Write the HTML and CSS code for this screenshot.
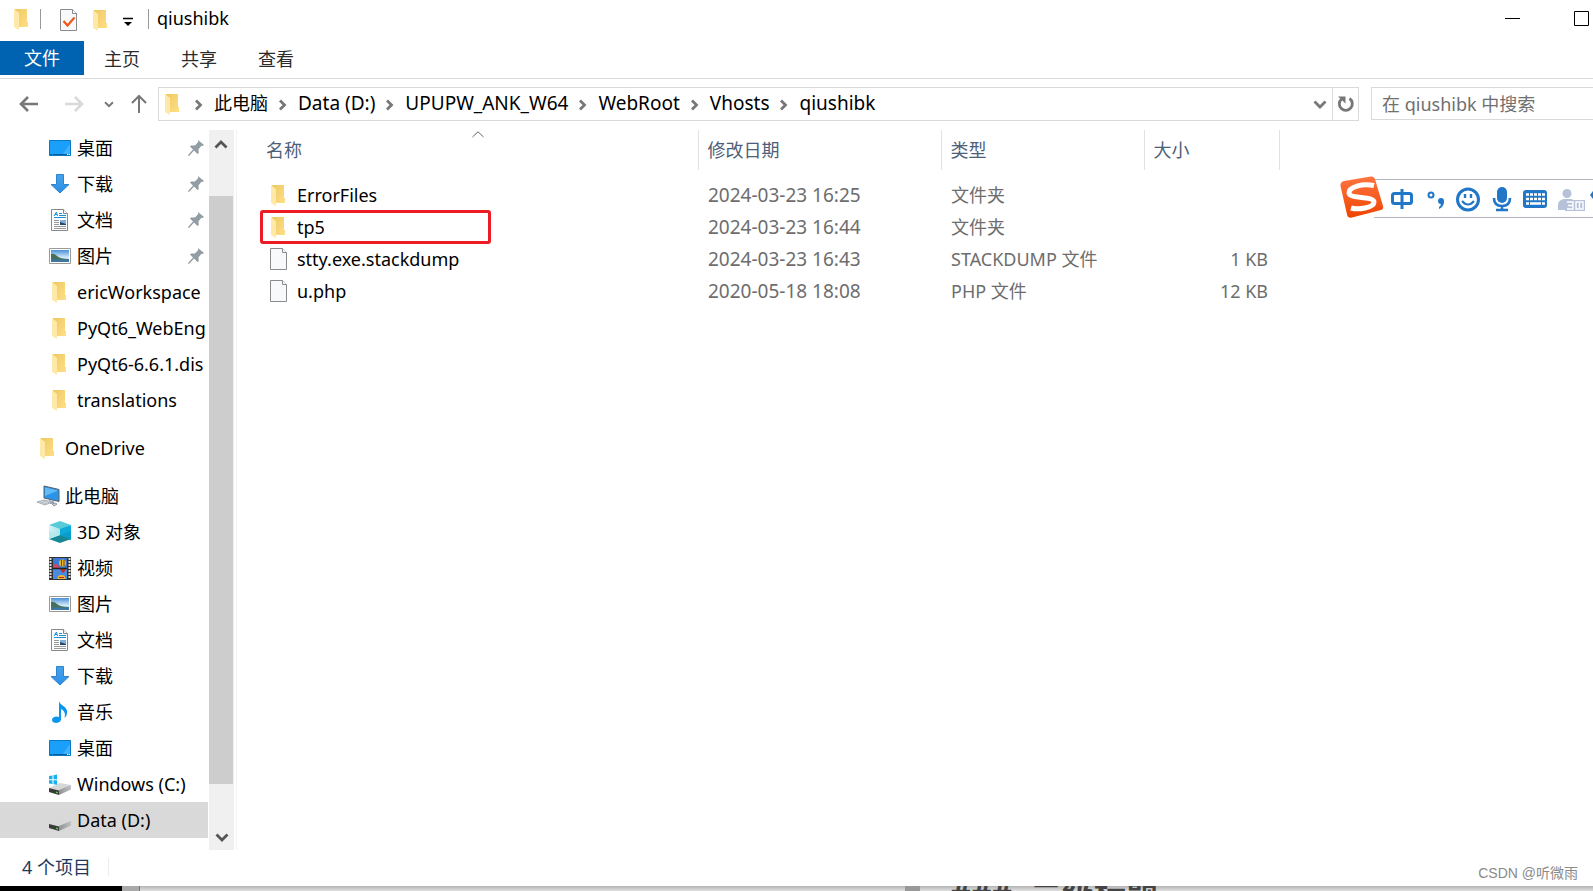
FILE: index.html
```
<!DOCTYPE html>
<html lang="zh-CN">
<head>
<meta charset="utf-8">
<title>qiushibk</title>
<link rel="stylesheet" href="styles.css">
</head>
<body>
<svg class="defs" aria-hidden="true">
  <defs>
    <linearGradient id="g-folder" x1="0" y1="0" x2="1" y2="1"><stop offset="0" stop-color="#eec963"/><stop offset="1" stop-color="#ffdf86"/></linearGradient>
    <linearGradient id="g-arrow" x1="0" y1="0" x2="0" y2="1"><stop offset="0" stop-color="#47a3ea"/><stop offset="1" stop-color="#2c8fe6"/></linearGradient>
    <linearGradient id="g-logo" x1="0" y1="0" x2="0" y2="1"><stop offset="0" stop-color="#ff7440"/><stop offset="1" stop-color="#ee4400"/></linearGradient>
    <linearGradient id="g-sky" x1="0" y1="0" x2="0" y2="1"><stop offset="0" stop-color="#4a90d9"/><stop offset=".6" stop-color="#cfe8f8"/></linearGradient>
    <linearGradient id="g-disk" x1="0" y1="0" x2="1" y2="0"><stop offset="0" stop-color="#8f9194"/><stop offset="1" stop-color="#bfc1c4"/></linearGradient>
    <linearGradient id="g-cube" x1="0" y1="0" x2="1" y2="0"><stop offset="0" stop-color="#d5f3f5"/><stop offset="1" stop-color="#a9e4ea"/></linearGradient>
    <symbol id="folder" viewBox="0 0 24 24"><path d="M5 2h12v13h1v5H5z" fill="url(#g-folder)"/><path d="M4 2l5 4v17l-5-3z" fill="#ffe9a8"/></symbol>
    <symbol id="file" viewBox="0 0 24 24"><path d="M3.500 1.500h12l4 4v17h-16z" fill="#f7f9fa" stroke="#8b8b8b"/><path d="M15.500 1.500v4h4" fill="#fff" stroke="#8b8b8b"/></symbol>
    <symbol id="desktop" viewBox="0 0 24 24"><path d="M1.500 4.500h21v15h-21z" fill="#1aa0fb" stroke="#0878c4"/><path d="M14 19L22 8v11z" fill="#3fb2ff"/><path d="M2 18.500h2m1 0h14" stroke="#085a96"/><path d="M19 18.500h1m1 0h1" stroke="#fff"/></symbol>
    <symbol id="download" viewBox="0 0 24 24"><path d="M8.500 2.500h7v10h5.500l-9 8.500-9-8.500h5.500z" fill="url(#g-arrow)" stroke="#2d83cc"/></symbol>
    <symbol id="document" viewBox="0 0 24 24"><path d="M3.500 1.500h12l4 4v17h-16z" fill="#fff" stroke="#888"/><path d="M15.500 1.500v4h4" fill="#fff" stroke="#888"/><path d="M6 8l2.500-4 1 4m-2.500-1.500h2M11 5.500h3M11 7.500h7M6 9.500h12" stroke="#1b8fd8" fill="none"/><path d="M6 12.500h5M6 14.500h5M6 16.500h5M6 18.500h12M6 20.500h12" stroke="#999"/><path d="M12 12h6v5h-6z" fill="#7fb0dc"/><path d="M12 14l6 2v1h-6z" fill="#26476a"/></symbol>
    <symbol id="picture" viewBox="0 0 24 24"><path d="M1.500 4.500h21v15h-21z" fill="#fff" stroke="#9a9a9a"/><path d="M3 6h18v12H3z" fill="url(#g-sky)"/><path d="M3 10q3-1 6 2t12 3v1H3z" fill="#47705a"/><path d="M3 15q8 1 18 0v3H3z" fill="#3e77a3"/></symbol>
    <symbol id="pc" viewBox="0 0 24 24"><path d="M8 2l15 3.500v12L8 14z" fill="#2a95e8" stroke="#56606b"/><path d="M9 3.500l13 3L9 12z" fill="#62baf6"/><path d="M13 16l5 1.500v2l-4 .5" fill="#8e9aa5"/><path d="M1 18l7-2 8 2-7 3z" fill="#e2e6e9" stroke="#a3adb5"/><path d="M4 18l7 2M7 17l7 2M5 19l6-2.500" stroke="#b3bdc5"/><path d="M16 20l3-1 2 1-3 2z" fill="#c8ced3" stroke="#8c98a3"/></symbol>
    <symbol id="cube" viewBox="0 0 24 24"><path d="M12 1l11 4-11 5L1 5z" fill="#57cbd8"/><path d="M1 5l11 4v9L1 20z" fill="url(#g-cube)"/><path d="M23 5l-11 4v9l11 2z" fill="#0cabda"/><path d="M1 19l11-4 11 4-11 4z" fill="#158795"/><path d="M12 15l11-4v8z" fill="#0b9ccb"/><path d="M12 15L1 11v8z" fill="#b5e9ed"/></symbol>
    <symbol id="film" viewBox="0 0 24 24"><path d="M1 1h22v23H1z" fill="#333"/><path d="M5 2h14v10H5z" fill="#3a79d6"/><path d="M5 13h14v10H5z" fill="#4a8ae2"/><path d="M2.500 2v21M21.500 2v21" stroke="#ddd" stroke-width="2" stroke-dasharray="2 1"/><path d="M5 9q3-2 5 0l2 3H5z" fill="#cc4a65"/><circle cx="14.500" cy="7" r="3.500" fill="#e3b82e"/><path d="M13.500 4v6M16 4v6" stroke="#8d3a20"/><path d="M12 13h6l-2 3.500h-2z" fill="#b93428"/><path d="M9.500 23a4 4 0 018 0z" fill="#e8b92c"/><path d="M11 21.500h5" stroke="#b22"/><path d="M5 12.500h14" stroke="#222" stroke-width="1.500"/></symbol>
    <symbol id="music" viewBox="0 0 24 24"><path d="M11 1c1 5 9 5 8 12-.3 2-1 4-2.500 5 1-4 .5-7-3.500-9v10c0 5-9 5-9 1 0-3 4-4.500 7-3z" fill="#0b97ee"/></symbol>
    <symbol id="disk" viewBox="0 0 24 24"><path d="M1 16l11-5 11 2-11 6z" fill="#d6d7d9"/><path d="M11 18l12-5v4.500L11 23z" fill="url(#g-disk)"/><path d="M1 16l10 2.500V23L1 20z" fill="#3a3a3a"/><path d="M8 19.500l2 .5v1.500l-2-.5z" fill="#46d33c"/></symbol>
    <symbol id="windisk" viewBox="0 0 24 24"><use href="#disk"/><path d="M1 4l3.500-.6v3.800H1zM5.500 3.200L9 2.600v4.600H5.500zM1 8.200h3.500V12L1 11.500zM5.500 8.200H9v4.600l-3.500-.6z" fill="#14b2ef"/></symbol>
    <symbol id="pin" viewBox="0 0 16 16"><path d="M10 0l6 5-1.500 1-1-.2-3 3.500.2 4L9.500 14 6 10.500 1.500 15.500 0 16l.5-1.500L5 9.500 2 6.500l1-1 4 0 3.200-3.500z" fill="#929ca3"/></symbol>
    <symbol id="chev" viewBox="0 0 12 12"><path d="M3 1.500L7.500 6 3 10.500" fill="none" stroke="#777" stroke-width="2.800"/></symbol>
    <symbol id="down" viewBox="0 0 14 14"><path d="M1.500 4.500L7 10l5.500-5.500" fill="none" stroke="currentColor" stroke-width="2.800"/></symbol>
  </defs>
</svg>

<div class="window">
  <header class="titlebar">
    <svg class="icon"><use href="#folder"/></svg>
    <span class="bar bar-first"></span>
    <button class="quick" aria-label="属性"><svg class="icon"><use href="#file"/><path d="M6.500 13l4 4.500 7-8" fill="none" stroke="#f2581b" stroke-width="2.200"/></svg></button>
    <button class="quick quick-new" aria-label="新建文件夹"><svg class="icon"><use href="#folder"/></svg></button>
    <button class="quick quick-menu" aria-label="自定义快速访问工具栏"><svg width="10" height="10"><path d="M0 1.500h10" stroke="#000" stroke-width="1.500"/><path d="M1 5h8L5 9z"/></svg></button>
    <span class="bar"></span>
    <h1 class="title">qiushibk</h1>
    <div class="controls">
      <button aria-label="最小化"><svg width="16" height="16"><path d="M0 7.500h15" stroke="#000"/></svg></button>
      <button aria-label="最大化"><svg width="16" height="16"><path d="M.5.5h14v14H.5z" fill="none" stroke="#000"/></svg></button>
    </div>
  </header>

  <nav class="tabs">
    <button class="tab tab-file">文件</button>
    <button class="tab">主页</button>
    <button class="tab">共享</button>
    <button class="tab">查看</button>
  </nav>

  <div class="addressrow">
    <div class="history">
      <button aria-label="后退"><svg width="20" height="18"><path d="M19 9H2M9 2L2 9l7 7" fill="none" stroke="#777" stroke-width="2.600"/></svg></button>
      <button class="forward" aria-label="前进"><svg width="20" height="18"><path d="M0 9h17M10 2l7 7-7 7" fill="none" stroke="#d9d9d9" stroke-width="2.600"/></svg></button>
      <button class="recent" aria-label="最近的位置"><svg width="10" height="10" viewBox="0 0 14 14"><use href="#down"/></svg></button>
      <button class="up" aria-label="上移"><svg width="16" height="20"><path d="M8 19V2M1 9l7-7 7 7" fill="none" stroke="#777" stroke-width="2"/></svg></button>
    </div>
    <div class="address">
      <svg class="icon"><use href="#folder"/></svg>
      <ol class="crumbs">
        <li><svg class="chev"><use href="#chev"/></svg><a href="#">此电脑</a></li>
        <li><svg class="chev"><use href="#chev"/></svg><a href="#">Data (D:)</a></li>
        <li><svg class="chev"><use href="#chev"/></svg><a href="#">UPUPW_ANK_W64</a></li>
        <li><svg class="chev"><use href="#chev"/></svg><a href="#">WebRoot</a></li>
        <li><svg class="chev"><use href="#chev"/></svg><a href="#">Vhosts</a></li>
        <li><svg class="chev"><use href="#chev"/></svg><a href="#">qiushibk</a></li>
      </ol>
      <button class="drop" aria-label="以前的位置"><svg width="14" height="14"><use href="#down"/></svg></button>
      <button class="refresh" aria-label="刷新"><svg width="18" height="18"><path d="M12.500 3.500a6.500 6.500 0 11-8 .5" fill="none" stroke="#777" stroke-width="2.800"/><path d="M1 1.500h7.500v7z" fill="#777"/></svg></button>
    </div>
    <input class="search" type="search" aria-label="搜索" placeholder="在 qiushibk 中搜索">
  </div>

  <div class="body">
    <aside class="side">
      <ul class="tree">
        <li><svg class="icon"><use href="#desktop"/></svg><span>桌面</span><svg class="pin"><use href="#pin"/></svg></li>
        <li><svg class="icon"><use href="#download"/></svg><span>下载</span><svg class="pin"><use href="#pin"/></svg></li>
        <li><svg class="icon"><use href="#document"/></svg><span>文档</span><svg class="pin"><use href="#pin"/></svg></li>
        <li><svg class="icon"><use href="#picture"/></svg><span>图片</span><svg class="pin"><use href="#pin"/></svg></li>
        <li><svg class="icon"><use href="#folder"/></svg><span>ericWorkspace</span></li>
        <li><svg class="icon"><use href="#folder"/></svg><span>PyQt6_WebEng</span></li>
        <li><svg class="icon"><use href="#folder"/></svg><span>PyQt6-6.6.1.dis</span></li>
        <li><svg class="icon"><use href="#folder"/></svg><span>translations</span></li>
        <li class="root"><svg class="icon"><use href="#folder"/></svg><span>OneDrive</span></li>
        <li class="root"><svg class="icon"><use href="#pc"/></svg><span>此电脑</span></li>
        <li><svg class="icon"><use href="#cube"/></svg><span>3D 对象</span></li>
        <li><svg class="icon"><use href="#film"/></svg><span>视频</span></li>
        <li><svg class="icon"><use href="#picture"/></svg><span>图片</span></li>
        <li><svg class="icon"><use href="#document"/></svg><span>文档</span></li>
        <li><svg class="icon"><use href="#download"/></svg><span>下载</span></li>
        <li><svg class="icon"><use href="#music"/></svg><span>音乐</span></li>
        <li><svg class="icon"><use href="#desktop"/></svg><span>桌面</span></li>
        <li><svg class="icon"><use href="#windisk"/></svg><span>Windows (C:)</span></li>
        <li class="selected"><svg class="icon"><use href="#disk"/></svg><span>Data (D:)</span></li>
      </ul>
      <div class="scrollbar">
        <button class="scroll-up" aria-label="向上滚动"><svg width="14" height="14"><use href="#down"/></svg></button>
        <div class="thumb"></div>
        <button aria-label="向下滚动"><svg width="14" height="14"><use href="#down"/></svg></button>
      </div>
    </aside>

    <main class="files">
      <table>
        <colgroup><col class="c-name"><col class="c-date"><col class="c-type"><col class="c-size"></colgroup>
        <thead>
          <tr><th>名称<svg class="sort" width="12" height="7"><path d="M.5 6L6 .8 11.500 6" fill="none" stroke="#666"/></svg></th><th>修改日期</th><th>类型</th><th>大小</th></tr>
        </thead>
        <tbody>
          <tr><td><div class="name"><svg class="icon"><use href="#folder"/></svg>ErrorFiles</div></td><td class="date">2024-03-23 16:25</td><td>文件夹</td><td></td></tr>
          <tr class="marked"><td><div class="name"><svg class="icon"><use href="#folder"/></svg>tp5</div></td><td class="date">2024-03-23 16:44</td><td>文件夹</td><td></td></tr>
          <tr><td><div class="name"><svg class="icon"><use href="#file"/></svg>stty.exe.stackdump</div></td><td class="date">2024-03-23 16:43</td><td>STACKDUMP 文件</td><td class="size">1 KB</td></tr>
          <tr><td><div class="name"><svg class="icon"><use href="#file"/></svg>u.php</div></td><td class="date">2020-05-18 18:08</td><td>PHP 文件</td><td class="size">12 KB</td></tr>
        </tbody>
      </table>
    </main>
  </div>

  <footer class="status"><span class="count">4 个项目</span><span class="credit">CSDN @听微雨</span></footer>
</div>

<div class="behind"><span class="dark"></span><span class="edge"></span><span class="gutter"></span><span class="grip"></span><span class="heading"><span>###</span><span>二级标题</span></span></div>

<div class="ime">
  <svg width="253" height="44" viewBox="0 0 253 44">
    <path d="M28 3.500H254M34 41.500H254" stroke="#b3b3bb"/>
    <path d="M4 5L31 .5q3-.5 4 2.500l8 27q1 3-2 4L12 41.500q-4 1-5-3L.5 10Q0 6 4 5z" fill="url(#g-logo)"/>
    <path d="M34 9.500C22 7 9 11 9 17c0 6 25 3 25 9 0 6-16 8-23 6" fill="none" stroke="#fff" stroke-width="5"/>
    <g fill="none" stroke="#2176c7" stroke-width="3">
      <rect x="52.500" y="17.500" width="19" height="10" rx="2"/><path d="M62 13v20"/>
      <circle cx="91" cy="19" r="2.500" stroke-width="2"/>
      <circle cx="128" cy="23.500" r="10.500"/>
      <path d="M122 25q6 7 12 0" stroke-width="2"/><path d="M125 18v4M131 18v4" stroke-width="2.400"/>
      <path d="M154 22q0 8 8 8t8-8M162 30v4M156 34h12" stroke-width="2.600"/>
    </g>
    <g fill="#2176c7">
      <circle cx="101" cy="25" r="3"/><path d="M104 25q0 6-5 8v-2q2-1 2-4z"/>
      <rect x="157" y="11" width="10" height="16" rx="5"/>
      <rect x="183" y="14" width="24" height="18" rx="3"/><path d="M250 19l3-4v8z"/>
    </g>
    <path d="M186 18.500h19M186 23h19" stroke="#fff" stroke-width="2.500" stroke-dasharray="3 1"/>
    <path d="M186 27.500h3M190 27.500h11M202 27.500h3" stroke="#fff" stroke-width="2.500"/>
    <g fill="#b5c2d8"><circle cx="227" cy="17.500" r="4.500"/><path d="M218 34v-5q0-5 6-6h6q5 0 5 5v6z"/><path d="M225 24h20v11h-20z"/></g>
    <path d="M227 26h6v7h-6M228 29.500h5M236 26h7v7h-7zM239.500 27v5" fill="none" stroke="#fff" stroke-width="1.400"/>
  </svg>
</div>
</body>
</html>
```

FILE: styles.css
```
* { box-sizing: border-box; }
body {
  margin: 0;
  height: 100vh;
  display: flex;
  flex-direction: column;
  overflow: hidden;
  background: #fff;
  color: #000;
  font: 18px/24px "Noto Sans", "Noto Sans CJK SC", sans-serif;
}
button { border: 0; padding: 0; background: none; font: inherit; color: inherit; display: flex; align-items: center; justify-content: center; }
ul, ol { list-style: none; margin: 0; padding: 0; }
.defs { position: absolute; width: 0; height: 0; }
.icon { width: 24px; height: 24px; flex: none; }
.window { flex: 1; min-height: 0; display: flex; flex-direction: column; }

.titlebar { height: 41px; padding-left: 10px; display: flex; align-items: center; padding-bottom: 4px; }
.bar { width: 1px; height: 20px; background: #999; }
.bar-first { margin: 0 16px 0 6px; }
.quick { padding-top: 2px; }
.quick-new { margin-left: 8px; }
.quick-menu { width: 24px; height: 24px; margin: 4px 8px 0 3px; }
.title { margin: 0; padding: 0 0 2px 8px; font-size: 18px; font-weight: 400; }
.controls { margin-left: auto; display: flex; gap: 53px; padding-right: 3px; }

.tabs { display: flex; height: 38px; padding-bottom: 3px; border-bottom: 1px solid #dadbdc; }
.tab { padding: 2px 21px 0 20px; color: #2b2b2b; }
.tab-file { padding: 0 24px; background: #0063b1; color: #fff; }

.addressrow { display: flex; align-items: flex-start; padding-top: 8px; height: 51px; flex: none; }
.history { width: 158px; height: 34px; display: flex; align-items: center; padding-left: 19px; color: #777; }
.forward { margin-left: 26px; }
.recent { margin-left: 19px; }
.up { margin-left: 17px; }
.address { flex: 1; height: 34px; display: flex; align-items: center; border: 1px solid #d9d9d9; padding-left: 2px; }
.crumbs { display: flex; flex: 1; margin-left: 7px; padding-bottom: 2px; font-size: 19px; }
.crumbs li { display: flex; align-items: center; }
.crumbs li:first-child { font-size: 18px; }
.crumbs a { color: #000; text-decoration: none; }
.chev { width: 12px; height: 12px; margin: 4px 9px 0; }
.crumbs li:first-child .chev { margin-left: 1px; }
.drop { width: 24px; color: #777; }
.refresh { width: 26px; height: 32px; border-left: 1px solid #d9d9d9; }
.search { width: 222px; height: 33px; margin-left: 12px; border: 1px solid #d9d9d9; border-right: 0; border-radius: 0; padding: 0 10px; font: inherit; outline: 0; }
.search::placeholder { color: #707070; opacity: 1; }

.body { flex: 1; min-height: 0; display: flex; }
.side { width: 237px; display: flex; border-right: 1px solid #f2f2f2; flex: none; }
.tree { width: 208px; overflow: hidden; }
.tree li { height: 36px; padding-left: 48px; display: flex; align-items: center; gap: 5px; white-space: nowrap; }
.tree .root { margin: 12px 0 0; padding-left: 36px; }
.tree .selected { background: #d9d9d9; }
.pin { width: 16px; height: 16px; margin: 0 4px 0 auto; flex: none; }
.scrollbar { width: 25px; margin-left: 1px; background: #f0f0f0; display: flex; flex-direction: column; color: #555; }
.scrollbar button { height: 26px; }
.scrollbar .scroll-up { height: 30px; transform: rotate(180deg); }
.thumb { width: 24px; height: 588px; margin: 36px 0 auto; background: #cdcdcd; }

.files { flex: 1; padding-left: 19px; }
table { border-collapse: collapse; table-layout: fixed; width: 1023px; color: #6d6d6d; }
.c-name { width: 442px; }
.c-date { width: 243px; }
.c-type { width: 203px; }
.c-size { width: 135px; }
th { height: 40px; padding: 0 9px; border-right: 1px solid #e2e2e2; text-align: left; font-weight: 400; color: #4c607a; position: relative; }
th:first-child { padding-left: 10px; }
.sort { position: absolute; left: 49%; top: 1px; }
tbody::before { content: ""; display: block; height: 9px; }
td { height: 32px; padding: 0 10px; white-space: nowrap; }
td:first-child { padding: 0; }
.date { font-size: 19px; }
.size { text-align: right; padding-right: 11px; }
.name { display: flex; align-items: center; gap: 6px; height: 32px; padding-left: 11px; color: #000; }
.marked .name { width: 229px; outline: 3px solid #ed1c24; outline-offset: -2px; border-radius: 2px; margin-left: 5px; padding-left: 6px; }

.status { height: 36px; display: flex; align-items: center; padding: 0 0 2px 22px; color: #1e395b; }
.count { padding-right: 17px; border-right: 1px solid #ececec; line-height: 18px; }
.credit { margin-left: auto; padding: 12px 15px 0 0; font: 14px/16px "Liberation Sans", "Noto Sans CJK SC", sans-serif; color: #8a8a8a; }

.behind { height: 5px; flex: none; display: flex; overflow: hidden; background: linear-gradient(#b4b4b4, #e0e0e0); }
.dark { width: 122px; background: #000; }
.edge { width: 18px; background: #a9a9a9; border-right: 1px solid #777; }
.gutter { width: 765px; }
.grip { width: 15px; background: #999; }
.heading { display: flex; gap: 18px; margin-left: 30px; font-size: 32px; line-height: 16px; font-weight: 700; color: #444; white-space: nowrap; }

.ime { position: absolute; top: 176px; right: 0; width: 253px; height: 44px; }
.ime svg { display: block; }
```
